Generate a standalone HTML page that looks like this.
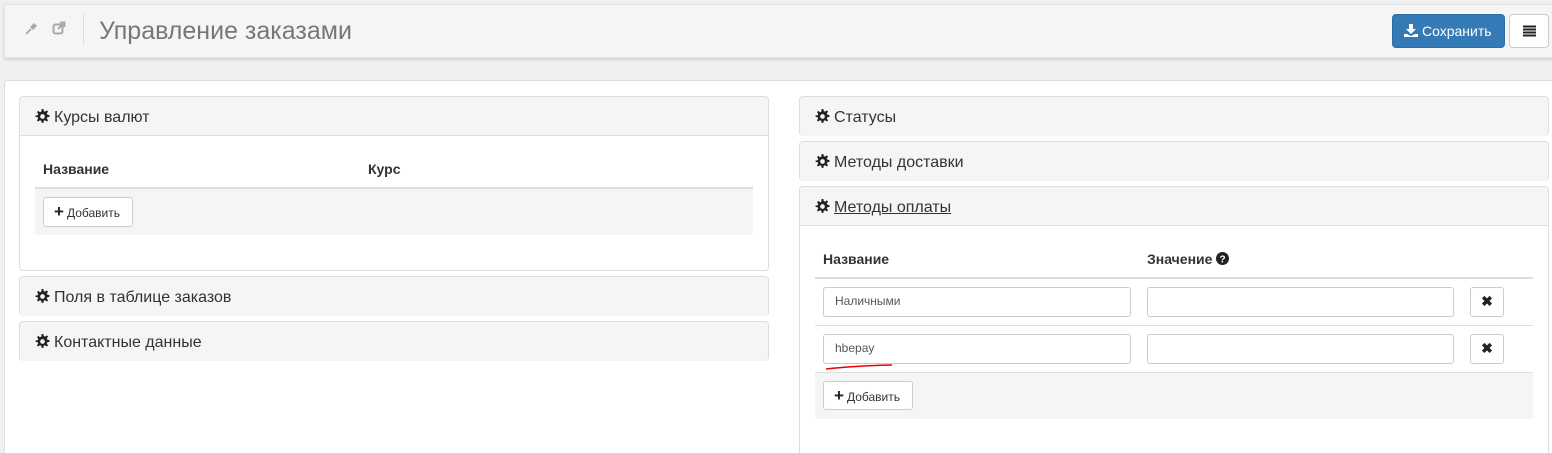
<!DOCTYPE html>
<html><head><meta charset="utf-8"><style>
*{box-sizing:border-box;margin:0;padding:0}
html,body{width:1552px;height:453px;overflow:hidden}
body{background:#f0f0f0;font-family:"Liberation Sans",Arial,sans-serif;color:#333;position:relative}
.a{position:absolute}
.hdr{left:4px;top:4px;width:1552px;height:54px;background:#f5f5f5;border:1px solid #e3e3e3;box-shadow:0 2px 3px rgba(0,0,0,.12)}
.content{left:4px;top:80px;width:1560px;height:380px;background:#fff;border:1px solid #ddd;border-radius:3px}
.panel{border:1px solid #ddd;border-radius:4px;background:#fff}
.ph{height:39px;background:#f5f5f5;border-bottom:1px solid #ddd;padding:2px 0 0 15px;font-size:16px;line-height:38px;color:#333;border-radius:3px 3px 0 0}
.panel.c .ph{border-bottom:none;border-radius:3px}
.ph svg{vertical-align:-2px;margin-right:4px}
.th{font-weight:bold;font-size:14px}
.btn{background:#fff;border:1px solid #ccc;border-radius:3px;font-size:12px;color:#333;line-height:27px;padding-left:10px}
.btn b{font-size:17px;margin-right:3px;color:#222}
.inp{border:1px solid #ccc;border-radius:3px;background:#fff;font-size:12px;color:#555;line-height:27px;padding-left:11px}
.x{border:1px solid #ccc;border-radius:3px;background:#fff;text-align:center;font-size:14px;line-height:27px;font-weight:bold;color:#222}
</style></head><body>
<div class="a hdr"></div>
<svg class="a" style="left:25px;top:21px" width="14" height="14" viewBox="0 0 14 14"><path d="M1 13 L6 8" stroke="#999" stroke-width="1.5"/><path d="M5 6 L8 9 L12 5 L9 2 Z" fill="#aaa"/></svg>
<svg class="a" style="left:52px;top:21px" width="14" height="14" viewBox="0 0 14 14"><rect x="1.5" y="3.5" width="9" height="9" rx="2" fill="none" stroke="#aaa" stroke-width="2"/><path d="M6 8 L12 2 M8 1.5 H12.5 V6" stroke="#aaa" stroke-width="2" fill="none"/></svg>
<div class="a" style="left:83px;top:14px;width:1px;height:31px;background:#ddd"></div>
<div class="a" style="left:99px;top:16px;font-size:25px;color:#777;line-height:30px">Управление заказами</div>
<div class="a" style="left:1392px;top:14px;width:113px;height:34px;background:#337ab7;border:1px solid #2e6da4;border-radius:4px;color:#fff;font-size:14px;line-height:32px;padding-left:11px"><svg width="14" height="13" viewBox="0 0 14 13" style="vertical-align:-1px;margin-right:4px"><path d="M5 0H9V5H12L7 10L2 5H5Z M0 10H3L7 12L11 10H14V13H0Z" fill="#fff"/></svg>Сохранить</div>
<div class="a" style="left:1509px;top:14px;width:40px;height:34px;background:#fff;border:1px solid #ccc;border-radius:4px"><svg class="a" style="left:13px;top:10px" width="13" height="12"><path d="M0 1.5H13M0 4.5H13M0 7.5H13M0 10.5H13" stroke="#222" stroke-width="2"/></svg></div>
<div class="a content"></div>

<svg width="0" height="0" style="position:absolute"><defs><g id="g"><path fill="#222" d="M6.2 0h1.6l.4 2 1.2.5 1.7-1.2 1.1 1.1-1.2 1.7.5 1.2 2 .4v1.6l-2 .4-.5 1.2 1.2 1.7-1.1 1.1-1.7-1.2-1.2.5-.4 2H6.2l-.4-2-1.2-.5-1.7 1.2-1.1-1.1 1.2-1.7-.5-1.2-2-.4V6.2l2-.4.5-1.2L1.9 2.9 3 1.8l1.7 1.2 1.2-.5z"/><circle cx="7" cy="7" r="2.2" fill="#f5f5f5"/></g></defs></svg>

<div class="a panel" style="left:19px;top:96px;width:750px;height:175px">
<div class="ph"><svg width="15" height="15" viewBox="0 0 14 14"><use href="#g"/></svg>Курсы валют</div></div>
<div class="a th" style="left:43px;top:161px">Название</div>
<div class="a th" style="left:368px;top:161px">Курс</div>
<div class="a" style="left:35px;top:187px;width:718px;height:48px;background:#f5f5f5;border-top:2px solid #ddd"></div>
<div class="a btn" style="left:43px;top:197px;width:90px;height:30px"><b>+</b>Добавить</div>

<div class="a panel c" style="left:19px;top:276px;width:750px;height:40px"><div class="ph"><svg width="15" height="15" viewBox="0 0 14 14"><use href="#g"/></svg>Поля в таблице заказов</div></div>
<div class="a panel c" style="left:19px;top:321px;width:750px;height:40px"><div class="ph"><svg width="15" height="15" viewBox="0 0 14 14"><use href="#g"/></svg>Контактные данные</div></div>

<div class="a panel c" style="left:799px;top:96px;width:750px;height:40px"><div class="ph"><svg width="15" height="15" viewBox="0 0 14 14"><use href="#g"/></svg>Статусы</div></div>
<div class="a panel c" style="left:799px;top:141px;width:750px;height:40px"><div class="ph"><svg width="15" height="15" viewBox="0 0 14 14"><use href="#g"/></svg>Методы доставки</div></div>
<div class="a panel" style="left:799px;top:186px;width:750px;height:280px"><div class="ph"><svg width="15" height="15" viewBox="0 0 14 14"><use href="#g"/></svg><u>Методы оплаты</u></div></div>
<div class="a th" style="left:823px;top:251px">Название</div>
<div class="a th" style="left:1147px;top:251px">Значение <svg width="13" height="13" style="vertical-align:-1px"><circle cx="6.5" cy="6.5" r="6.5" fill="#222"/><text x="6.5" y="10.5" font-size="10" font-weight="bold" fill="#fff" text-anchor="middle" font-family="Liberation Sans">?</text></svg></div>
<div class="a" style="left:815px;top:277px;width:718px;height:2px;background:#ddd"></div>
<div class="a inp" style="left:823px;top:287px;width:308px;height:30px">Наличными</div>
<div class="a inp" style="left:1147px;top:287px;width:307px;height:30px"></div>
<div class="a x" style="left:1470px;top:287px;width:34px;height:30px">✖</div>
<div class="a" style="left:815px;top:325px;width:718px;height:1px;background:#ddd"></div>
<div class="a inp" style="left:823px;top:334px;width:308px;height:30px">hbepay</div>
<div class="a inp" style="left:1147px;top:334px;width:307px;height:30px"></div>
<div class="a x" style="left:1470px;top:334px;width:34px;height:30px">✖</div>
<svg class="a" style="left:824px;top:363px" width="70" height="8"><path d="M2 6 Q30 3 68 2" stroke="#e00" stroke-width="1.5" fill="none"/></svg>
<div class="a" style="left:815px;top:372px;width:718px;height:47px;background:#f5f5f5;border-top:1px solid #ddd"></div>
<div class="a btn" style="left:823px;top:381px;width:90px;height:29px"><b>+</b>Добавить</div>
</body></html>
